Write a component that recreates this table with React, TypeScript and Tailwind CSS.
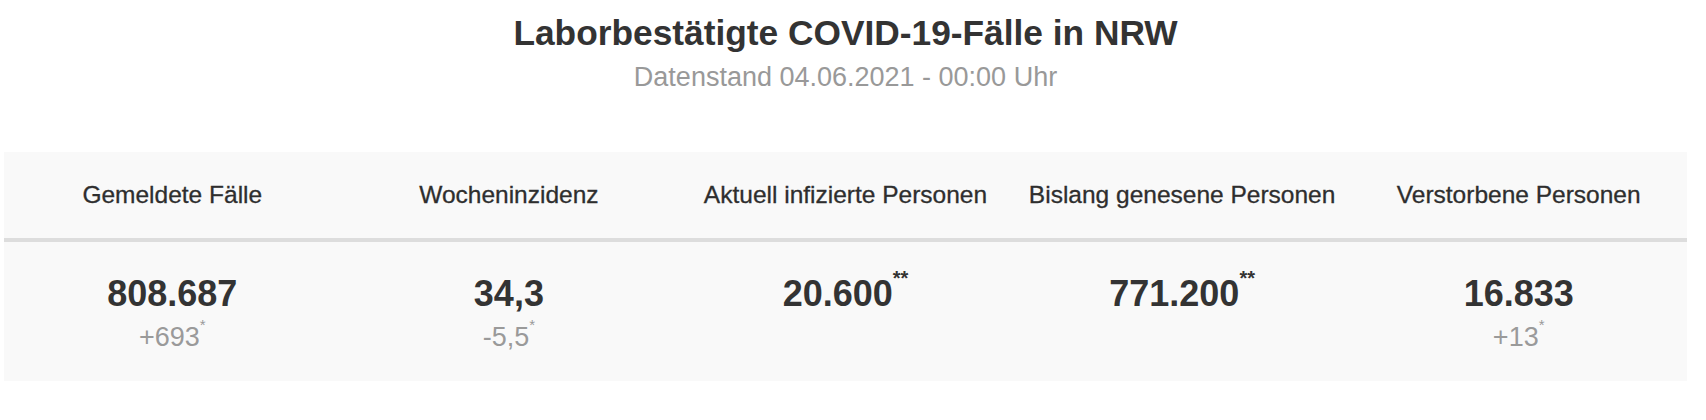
import React from "react";

type Stat = {
  label: string;
  value: string;
  valueMark?: string;
  delta?: string;
};

const stats: Stat[] = [
  { label: "Gemeldete Fälle", value: "808.687", delta: "+693" },
  { label: "Wocheninzidenz", value: "34,3", delta: "-5,5" },
  { label: "Aktuell infizierte Personen", value: "20.600", valueMark: "**" },
  { label: "Bislang genesene Personen", value: "771.200", valueMark: "**" },
  { label: "Verstorbene Personen", value: "16.833", delta: "+13" },
];

export default function App() {
  return (
    <div
      className="w-[1691px] px-1 bg-white min-h-[420px]"
      style={{ fontFamily: '"Liberation Sans", Arial, Helvetica, sans-serif' }}
    >
      <div className="text-center pt-[13px]">
        <h1 className="text-[35.3px] leading-[40px] font-bold text-[#333333]">
          Laborbestätigte COVID-19-Fälle in NRW
        </h1>
        <p className="mt-[8px] text-[27px] leading-[32px] text-[#999999]">
          Datenstand 04.06.2021 - 00:00 Uhr
        </p>
      </div>

      <div className="mt-[59px] bg-[#f9f9f9]">
        <div className="grid grid-cols-5 h-[90px] border-b-4 border-[#dddddd]">
          {stats.map((s) => (
            <div
              key={s.label}
              className="flex items-center justify-center text-[24.5px] leading-[28px] text-[#2e2e2e] [-webkit-text-stroke:0.3px_#2e2e2e]"
            >
              {s.label}
            </div>
          ))}
        </div>
        <div className="grid grid-cols-5 h-[139px]">
          {stats.map((s) => (
            <div key={s.label} className="flex flex-col items-center pt-[32px]">
              <div className="text-[36px] leading-[40px] font-bold text-[#333333] whitespace-nowrap">
                {s.value}
                {s.valueMark && (
                  <sup className="text-[20px] leading-none font-bold top-[-21px] align-baseline relative">
                    {s.valueMark}
                  </sup>
                )}
              </div>
              {s.delta && (
                <div className="mt-[7px] text-[27px] leading-[32px] text-[#9a9a9a] whitespace-nowrap">
                  {s.delta}
                  <sup className="text-[15px] leading-none top-[-16px] align-baseline relative">
                    *
                  </sup>
                </div>
              )}
            </div>
          ))}
        </div>
      </div>
    </div>
  );
}
